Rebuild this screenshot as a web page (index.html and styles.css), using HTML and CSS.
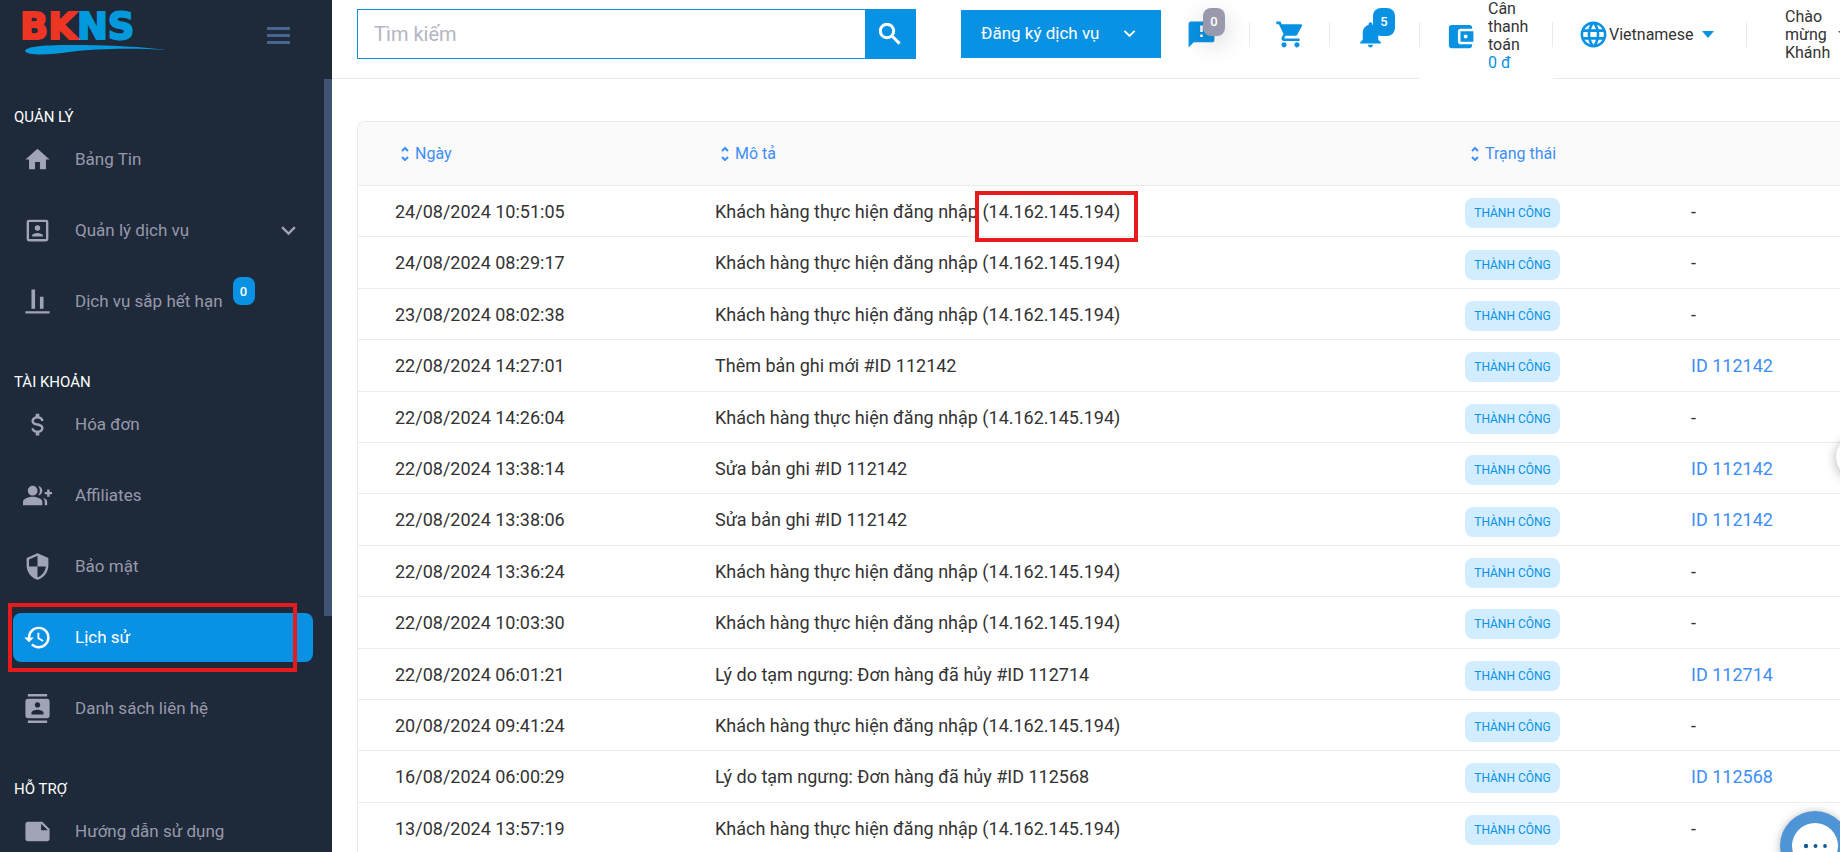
FILE: index.html
```html
<!DOCTYPE html>
<html lang="vi">
<head>
<meta charset="utf-8">
<meta name="viewport" content="width=device-width, initial-scale=1">
<title>BKNS - Lịch sử</title>
<link rel="stylesheet" href="styles.css">
</head>
<body>
<div class="app">
  <aside class="sidebar">
    <div class="brand">
      <a class="logo" href="#" aria-label="BKNS">
        <span class="logo-text"><span class="logo-red">BK</span>NS</span>
        <svg class="logo-swoosh" viewBox="0 0 142 10" aria-hidden="true"><path d="M0 6C1 2 14 0 46 0C84 0 120 2 142 5C112 3 74 3 44 7C26 10 2 11 0 6Z"/></svg>
      </a>
      <button class="toggle" type="button" aria-label="Menu"><span></span><span></span><span></span></button>
    </div>
    <div class="scroll-thumb"></div>
    <nav class="menu">
      <h2 class="menu-title">QUẢN LÝ</h2>
      <ul class="menu-list">
        <li><a class="item" href="#"><svg class="icon" viewBox="0 0 24 24"><path d="M10,20V14H14V20H19V12H22L12,3L2,12H5V20H10Z"/></svg>Bảng Tin</a></li>
        <li><a class="item" href="#"><svg class="icon" viewBox="0 0 24 24"><path d="M19,19H5V5H19M19,3H5A2,2 0 0,0 3,5V19A2,2 0 0,0 5,21H19A2,2 0 0,0 21,19V5A2,2 0 0,0 19,3M16.5,16.25C16.5,14.75 13.5,14 12,14C10.5,14 7.5,14.75 7.5,16.25V17H16.5M12,12.25A2.25,2.25 0 0,0 14.25,10A2.25,2.25 0 0,0 12,7.75A2.25,2.25 0 0,0 9.75,10A2.25,2.25 0 0,0 12,12.25Z"/></svg>Quản lý dịch vụ<svg class="icon item-arrow" viewBox="0 0 24 24"><path d="M7.41,8.58L12,13.17L16.59,8.58L18,10L12,16L6,10L7.41,8.58Z"/></svg></a></li>
        <li><a class="item" href="#"><svg class="icon" viewBox="0 0 24 24"><path d="M22 22H2V20H22V22M10 2H7V18H10V2M17 8H14V18H17V8Z"/></svg>Dịch vụ sắp hết hạn<span class="count count-menu">0</span></a></li>
      </ul>
      <h2 class="menu-title">TÀI KHOẢN</h2>
      <ul class="menu-list">
        <li><a class="item" href="#"><svg class="icon" viewBox="0 0 24 24"><path d="M7,15H9C9,16.08 10.37,17 12,17C13.63,17 15,16.08 15,15C15,13.9 13.96,13.5 11.76,12.97C9.64,12.44 7,11.78 7,9C7,7.21 8.47,5.69 10.5,5.18V3H13.5V5.18C15.53,5.69 17,7.21 17,9H15C15,7.92 13.63,7 12,7C10.37,7 9,7.92 9,9C9,10.1 10.04,10.5 12.24,11.03C14.36,11.56 17,12.22 17,15C17,16.79 15.53,18.31 13.5,18.82V21H10.5V18.82C8.47,18.31 7,16.79 7,15Z"/></svg>Hóa đơn</a></li>
        <li><a class="item" href="#"><svg class="icon" viewBox="0 0 24 24"><path d="M22 9V7h-2v2h-2v2h2v2h2v-2h2V9zM8 12c2.21 0 4-1.79 4-4s-1.79-4-4-4-4 1.79-4 4 1.79 4 4 4zM8 13c-2.67 0-8 1.34-8 4v3h16v-3c0-2.66-5.33-4-8-4zM12.51 4.05C13.43 5.11 14 6.49 14 8s-.57 2.89-1.49 3.95C14.47 11.7 16 10.04 16 8s-1.53-3.7-3.49-3.95zM16.53 13.83C17.42 14.66 18 15.7 18 17v3h2v-3c0-1.45-1.59-2.51-3.47-3.17z"/></svg>Affiliates</a></li>
        <li><a class="item" href="#"><svg class="icon" viewBox="0 0 24 24"><path d="M12 1L3 5v6c0 5.55 3.84 10.74 9 12 5.16-1.26 9-6.45 9-12V5l-9-4zm0 10.99h7c-.53 4.12-3.28 7.79-7 8.94V12H5V6.3l7-3.11v8.8z"/></svg>Bảo mật</a></li>
        <li><a class="item item-active" href="#"><svg class="icon" viewBox="0 0 24 24"><path d="M13.5,8H12V13L16.28,15.54L17,14.33L13.5,12.25V8M13,3A9,9 0 0,0 4,12H1L4.96,16.03L9,12H6A7,7 0 0,1 13,5A7,7 0 0,1 20,12A7,7 0 0,1 13,19C11.07,19 9.32,18.21 8.06,16.94L6.64,18.36C8.27,20 10.5,21 13,21A9,9 0 0,0 22,12A9,9 0 0,0 13,3"/></svg>Lịch sử<span class="mark mark-menu"></span></a></li>
        <li><a class="item" href="#"><svg class="icon" viewBox="0 0 24 24"><path d="M20 0H4v2h16V0zM4 24h16v-2H4v2zM20 4H4c-1.1 0-2 .9-2 2v12c0 1.1.9 2 2 2h16c1.1 0 2-.9 2-2V6c0-1.1-.9-2-2-2zm-8 2.75c1.24 0 2.25 1.01 2.25 2.25s-1.01 2.25-2.25 2.25S9.75 10.24 9.75 9 10.76 6.75 12 6.75zM17 17H7v-1.5c0-1.67 3.33-2.5 5-2.5s5 .83 5 2.5V17z"/></svg>Danh sách liên hệ</a></li>
      </ul>
      <h2 class="menu-title">HỖ TRỢ</h2>
      <ul class="menu-list">
        <li><a class="item" href="#"><svg class="icon" viewBox="0 0 24 24"><path d="M22 10l-6-6H4c-1.1 0-2 .9-2 2v12.01c0 1.1.9 1.99 2 1.99l16-.01c1.1 0 2-.89 2-1.99v-8zm-7-4.5l5.5 5.5H15V5.5z"/></svg>Hướng dẫn sử dụng</a></li>
      </ul>
    </nav>
  </aside>

  <div class="page">
    <header class="topbar">
      <form class="search" role="search">
        <input class="search-input" type="text" placeholder="Tìm kiếm" aria-label="Tìm kiếm">
        <button class="search-btn" type="button" aria-label="Tìm"><svg viewBox="0 0 22 22"><circle cx="8" cy="8" r="6.7"/><path d="M12.8 12.8L20.6 20.6"/></svg></button>
      </form>
      <button class="register" type="button">Đăng ký dịch vụ<svg class="register-arrow" viewBox="0 0 24 24"><path d="M7.41,8.58L12,13.17L16.59,8.58L18,10L12,16L6,10L7.41,8.58Z"/></svg></button>
      <div class="tools">
        <button class="tool tool-message" type="button" aria-label="Tin nhắn"><svg class="tool-icon" viewBox="0 0 24 24"><path d="M13,10H11V5H13M13,14H11V12H13M20,2H4A2,2 0 0,0 2,4V22L6,18H20A2,2 0 0,0 22,16V4C22,2.89 21.1,2 20,2Z"/></svg><span class="count count-grey">0</span></button>
        <button class="tool tool-cart" type="button" aria-label="Giỏ hàng"><svg class="tool-icon" viewBox="0 0 24 24"><path d="M7 18c-1.1 0-1.99.9-1.99 2S5.9 22 7 22s2-.9 2-2-.9-2-2-2zM1 2v2h2l3.6 7.59-1.35 2.45c-.16.28-.25.61-.25.96 0 1.1.9 2 2 2h12v-2H7.42c-.14 0-.25-.11-.25-.25l.03-.12.9-1.63h7.45c.75 0 1.41-.41 1.75-1.03l3.58-6.49c.08-.14.12-.31.12-.48 0-.55-.45-1-1-1H5.21l-.94-2H1zm16 16c-1.1 0-1.99.9-1.99 2s.89 2 1.99 2 2-.9 2-2-.9-2-2-2z"/></svg></button>
        <button class="tool tool-bell" type="button" aria-label="Thông báo"><svg class="tool-icon" viewBox="0 0 24 24"><path d="M12 22c1.1 0 2-.9 2-2h-4c0 1.1.89 2 2 2zm6-6v-5c0-3.07-1.64-5.64-4.5-6.32V4c0-.83-.67-1.5-1.5-1.5s-1.5.67-1.5 1.5v.68C7.63 5.36 6 7.92 6 11v5l-2 2v1h16v-1l-2-2z"/></svg><span class="count">5</span></button>
        <a class="tool tool-wallet" href="#"><svg class="tool-icon" viewBox="0 0 24 24"><path d="M21 18v1c0 1.1-.9 2-2 2H5c-1.11 0-2-.9-2-2V5c0-1.1.89-2 2-2h14c1.1 0 2 .9 2 2v1h-9c-1.11 0-2 .9-2 2v8c0 1.1.89 2 2 2h9zm-9-2h10V8H12v8zm4-2.5c-.83 0-1.5-.67-1.5-1.5s.67-1.5 1.5-1.5 1.5.67 1.5 1.5-.67 1.5-1.5 1.5z"/></svg><span class="tool-text">Cân<br>thanh<br>toán<br><span class="amount">0 đ</span></span></a>
        <button class="tool tool-lang" type="button"><svg class="tool-icon" viewBox="0 0 24 24"><path d="M11.99 2C6.47 2 2 6.48 2 12s4.47 10 9.99 10C17.52 22 22 17.52 22 12S17.52 2 11.99 2zm6.93 6h-2.95c-.32-1.25-.78-2.45-1.38-3.56 1.84.63 3.37 1.91 4.33 3.56zM12 4.04c.83 1.2 1.48 2.53 1.91 3.96h-3.82c.43-1.43 1.08-2.76 1.91-3.96zM4.26 14C4.1 13.36 4 12.69 4 12s.1-1.36.26-2h3.38c-.08.66-.14 1.32-.14 2s.06 1.34.14 2H4.26zm.82 2h2.95c.32 1.25.78 2.45 1.38 3.56-1.84-.63-3.37-1.9-4.33-3.56zm2.95-8H5.08c.96-1.66 2.49-2.93 4.33-3.56C8.81 5.55 8.35 6.75 8.03 8zM12 19.96c-.83-1.2-1.48-2.53-1.91-3.96h3.82c-.43 1.43-1.08 2.76-1.91 3.96zM14.34 14H9.66c-.09-.66-.16-1.32-.16-2s.07-1.35.16-2h4.68c.09.65.16 1.32.16 2s-.07 1.34-.16 2zm.25 5.56c.6-1.11 1.06-2.31 1.38-3.56h2.95c-.96 1.65-2.49 2.93-4.33 3.56zM16.36 14c.08-.66.14-1.32.14-2s-.06-1.34-.14-2h3.38c.16.64.26 1.31.26 2s-.1 1.36-.26 2h-3.38z"/></svg>Vietnamese<span class="caret"></span></button>
        <button class="tool tool-user" type="button"><span class="tool-text">Chào<br>mừng<br>Khánh</span><span class="caret caret-dark"></span></button>
      </div>
    </header>

    <main class="content">
      <div class="card">
        <table class="history">
          <colgroup><col class="col-date"><col><col class="col-status"><col class="col-ref"></colgroup>
          <thead>
            <tr>
              <th><a class="sort" href="#"><svg viewBox="0 0 8 14"><path d="M1 4L4 1L7 4M1 10L4 13L7 10"/></svg>Ngày</a></th>
              <th><a class="sort" href="#"><svg viewBox="0 0 8 14"><path d="M1 4L4 1L7 4M1 10L4 13L7 10"/></svg>Mô tả</a></th>
              <th><a class="sort" href="#"><svg viewBox="0 0 8 14"><path d="M1 4L4 1L7 4M1 10L4 13L7 10"/></svg>Trạng thái</a></th>
              <th></th>
            </tr>
          </thead>
          <tbody>
            <tr><td>24/08/2024 10:51:05</td><td>Khách hàng thực hiện đăng nhập <span class="marked">(14.162.145.194)<span class="mark mark-ip"></span></span></td><td class="status"><span class="tag">THÀNH CÔNG</span></td><td>-</td></tr>
            <tr><td>24/08/2024 08:29:17</td><td>Khách hàng thực hiện đăng nhập (14.162.145.194)</td><td class="status"><span class="tag">THÀNH CÔNG</span></td><td>-</td></tr>
            <tr><td>23/08/2024 08:02:38</td><td>Khách hàng thực hiện đăng nhập (14.162.145.194)</td><td class="status"><span class="tag">THÀNH CÔNG</span></td><td>-</td></tr>
            <tr><td>22/08/2024 14:27:01</td><td>Thêm bản ghi mới #ID 112142</td><td class="status"><span class="tag">THÀNH CÔNG</span></td><td><a href="#">ID 112142</a></td></tr>
            <tr><td>22/08/2024 14:26:04</td><td>Khách hàng thực hiện đăng nhập (14.162.145.194)</td><td class="status"><span class="tag">THÀNH CÔNG</span></td><td>-</td></tr>
            <tr><td>22/08/2024 13:38:14</td><td>Sửa bản ghi #ID 112142</td><td class="status"><span class="tag">THÀNH CÔNG</span></td><td><a href="#">ID 112142</a></td></tr>
            <tr><td>22/08/2024 13:38:06</td><td>Sửa bản ghi #ID 112142</td><td class="status"><span class="tag">THÀNH CÔNG</span></td><td><a href="#">ID 112142</a></td></tr>
            <tr><td>22/08/2024 13:36:24</td><td>Khách hàng thực hiện đăng nhập (14.162.145.194)</td><td class="status"><span class="tag">THÀNH CÔNG</span></td><td>-</td></tr>
            <tr><td>22/08/2024 10:03:30</td><td>Khách hàng thực hiện đăng nhập (14.162.145.194)</td><td class="status"><span class="tag">THÀNH CÔNG</span></td><td>-</td></tr>
            <tr><td>22/08/2024 06:01:21</td><td>Lý do tạm ngưng: Đơn hàng đã hủy #ID 112714</td><td class="status"><span class="tag">THÀNH CÔNG</span></td><td><a href="#">ID 112714</a></td></tr>
            <tr><td>20/08/2024 09:41:24</td><td>Khách hàng thực hiện đăng nhập (14.162.145.194)</td><td class="status"><span class="tag">THÀNH CÔNG</span></td><td>-</td></tr>
            <tr><td>16/08/2024 06:00:29</td><td>Lý do tạm ngưng: Đơn hàng đã hủy #ID 112568</td><td class="status"><span class="tag">THÀNH CÔNG</span></td><td><a href="#">ID 112568</a></td></tr>
            <tr><td>13/08/2024 13:57:19</td><td>Khách hàng thực hiện đăng nhập (14.162.145.194)</td><td class="status"><span class="tag">THÀNH CÔNG</span></td><td>-</td></tr>
          </tbody>
        </table>
      </div>
    </main>
  </div>
</div>
<button class="side-handle" type="button" aria-label="Mở"></button>
<button class="chat" type="button" aria-label="Chat"><svg viewBox="0 0 70 70"><circle class="chat-face" cx="35" cy="35" r="23"/><circle cx="26" cy="35" r="2.2"/><circle cx="35.5" cy="35" r="2"/><circle cx="45" cy="35" r="1.9"/></svg></button>
</body>
</html>
```
FILE: styles.css
```css
* { box-sizing: border-box; }

body {
  margin: 0;
  height: 100vh;
  overflow: hidden;
  background: #fff;
  color: #333;
  font-family: Roboto, "Liberation Sans", sans-serif;
  font-size: 16px;
}

button, input { font: inherit; color: inherit; }
button { border: 0; padding: 0; background: none; cursor: pointer; }
a { color: #3e8ef7; text-decoration: none; }

.app { display: flex; height: 100vh; overflow: hidden; }

/* Sidebar */
.sidebar {
  position: relative;
  flex: none;
  width: 332px;
  background: #1e2939;
  overflow: hidden;
}
.brand {
  display: flex;
  justify-content: space-between;
  align-items: flex-start;
  height: 79px;
  padding: 9px 42px 0 20px;
}
.logo { display: flex; flex-direction: column; }
.logo-text {
  font-family: "DejaVu Sans", sans-serif;
  font-weight: 700;
  font-size: 37px;
  line-height: 36px;
  color: #0399dd;
  -webkit-text-stroke: 2px currentColor;
}
.logo-red { color: #ee3524; }
.logo-swoosh { width: 142px; height: 10px; margin-left: 5px; fill: #0399dd; }
.toggle { display: flex; flex-direction: column; gap: 4px; width: 23px; margin-top: 18px; }
.toggle span { height: 3px; background: #4a6491; }
.scroll-thumb {
  position: absolute;
  top: 79px;
  right: 0;
  width: 8px;
  height: 63%;
  background: #3f5475;
}
.menu { padding: 26px 19px 0 13px; }
.menu-title {
  margin: 0 0 6px 1px;
  font-size: 15px;
  font-weight: 400;
  line-height: 24px;
  color: #fff;
}
.menu-list {
  display: flex;
  flex-direction: column;
  gap: 22px;
  margin: 0 0 44px;
  padding: 0;
  list-style: none;
}
.item {
  position: relative;
  display: flex;
  align-items: center;
  height: 49px;
  padding: 0 10px 1px;
  border-radius: 8px;
  color: #9899ac;
  font-size: 17px;
}
.icon { flex: none; width: 29px; height: 29px; margin-right: 23px; fill: #a1a3b7; }
.item-arrow { margin: 0 0 0 auto; }
.item-active { background: #0992e4; color: #fff; }
.item-active .icon { fill: #fff; }

.count {
  display: flex;
  align-items: center;
  justify-content: center;
  width: 22px;
  height: 28px;
  border-radius: 8px;
  background: #0992e4;
  color: #fff;
  font-size: 13px;
  font-weight: 500;
}
.count-menu { align-self: flex-start; margin-left: 10px; }

.mark { position: absolute; border: 4px solid #e71b1b; pointer-events: none; }
.mark-menu { inset: -10px 16px -10px -5px; }

/* Top bar */
.page { flex: 1; min-width: 0; display: flex; flex-direction: column; }
.topbar {
  display: flex;
  align-items: flex-start;
  flex: none;
  height: 79px;
  padding-left: 25px;
  border-bottom: 1px solid #ebebeb;
}
.search {
  display: flex;
  width: 559px;
  height: 50px;
  margin-top: 9px;
  border: 1px solid #0992e4;
}
.search-input {
  flex: 1;
  min-width: 0;
  padding: 0 16px;
  border: 0;
  outline: 0;
  font-size: 20px;
}
.search-input::placeholder { color: #b5b5c3; opacity: 1; }
.search-btn { display: grid; place-items: center; width: 50px; background: #0992e4; }
.search-btn svg { width: 22px; height: 22px; fill: none; stroke: #fff; stroke-width: 3; }
.register {
  display: flex;
  align-items: center;
  justify-content: space-between;
  width: 200px;
  height: 48px;
  margin: 10px 0 0 45px;
  padding: 0 20px 2px;
  background: #0992e4;
  color: #fff;
  font-size: 17px;
}
.register-arrow { width: 23px; height: 23px; fill: #fff; }

.tools { flex: 1; display: flex; height: 69px; min-width: 0; }
.tool {
  position: relative;
  display: flex;
  align-items: center;
  flex: none;
  color: #333;
  line-height: 18px;
  text-align: left;
}
.tool:not(:last-child)::after {
  content: "";
  position: absolute;
  top: 22px;
  right: 0;
  width: 1px;
  height: 25px;
  background: #ebebeb;
}
.tool-icon { flex: none; width: 31px; height: 31px; fill: #0992e4; }
.tool .count { position: absolute; top: 8px; right: 25px; }
.tool .count-grey { background: #9899ac; box-shadow: 0 8px 24px rgba(0, 0, 0, .18); }
.tool-message { width: 89px; padding-left: 25px; }
.tool-cart { width: 80px; padding-left: 25px; }
.tool-bell { width: 90px; padding-left: 25px; }
.tool-wallet {
  width: 133px;
  height: 79px;
  padding: 0 0 7px 25px;
  background: #fff;
}
.tool-wallet .tool-text { margin-left: 12px; }
.amount { color: #0992e4; }
.tool-lang { width: 194px; padding-left: 25px; }
.caret {
  margin-left: 8px;
  border: 6px solid transparent;
  border-top: 7px solid #0992e4;
  border-bottom: 0;
}
.caret-dark { border-top-color: #666; }
.tool-user { padding-left: 38px; }

/* History table */
.content { flex: 1; min-height: 0; padding: 42px 0 0 25px; overflow: hidden; }
.card {
  border: solid #ebebeb;
  border-width: 1px 0 0 1px;
  border-radius: 8px 0 0 0;
  overflow: hidden;
}
.history { width: 100%; table-layout: fixed; border-collapse: separate; border-spacing: 0; }
.col-date { width: 320px; }
.col-status { width: 226px; }
.col-ref { width: 186px; }
.history th {
  height: 64px;
  padding: 0 0 0 43px;
  border-bottom: 1px solid #ebebeb;
  background: #fafafa;
  font-weight: 400;
  text-align: left;
}
.history td {
  padding: 14px 0 13px 37px;
  border-bottom: 1px solid #ebebf0;
  font-size: 18px;
  line-height: 1.3;
  white-space: nowrap;
}
.sort { display: flex; align-items: center; gap: 6px; }
.sort svg { width: 8px; height: 14px; fill: none; stroke: #3e8ef7; stroke-width: 2; }
.history .status { padding-top: 12px; padding-bottom: 8px; }
.tag {
  display: flex;
  align-items: center;
  justify-content: center;
  width: 95px;
  height: 30px;
  border-radius: 8px;
  background: #d1edff;
  color: #0992e4;
  font-size: 12px;
  line-height: 30px;
}
.marked { position: relative; }
.mark-ip { inset: -10px -18px -20px -7px; }

/* Floating controls */
.side-handle {
  position: fixed;
  top: 436px;
  right: -38px;
  width: 42px;
  height: 42px;
  border-radius: 50%;
  background: #fff;
  box-shadow: 0 2px 12px rgba(0, 0, 0, .3);
}
.chat {
  position: fixed;
  right: -10px;
  bottom: -29px;
  width: 70px;
  height: 70px;
  border-radius: 50%;
  background: #4f95d6;
  box-shadow: 0 1px 8px rgba(0, 0, 0, .3);
}
.chat svg { display: block; width: 70px; height: 70px; fill: #135a93; }
.chat .chat-face { fill: #fff; }
```
